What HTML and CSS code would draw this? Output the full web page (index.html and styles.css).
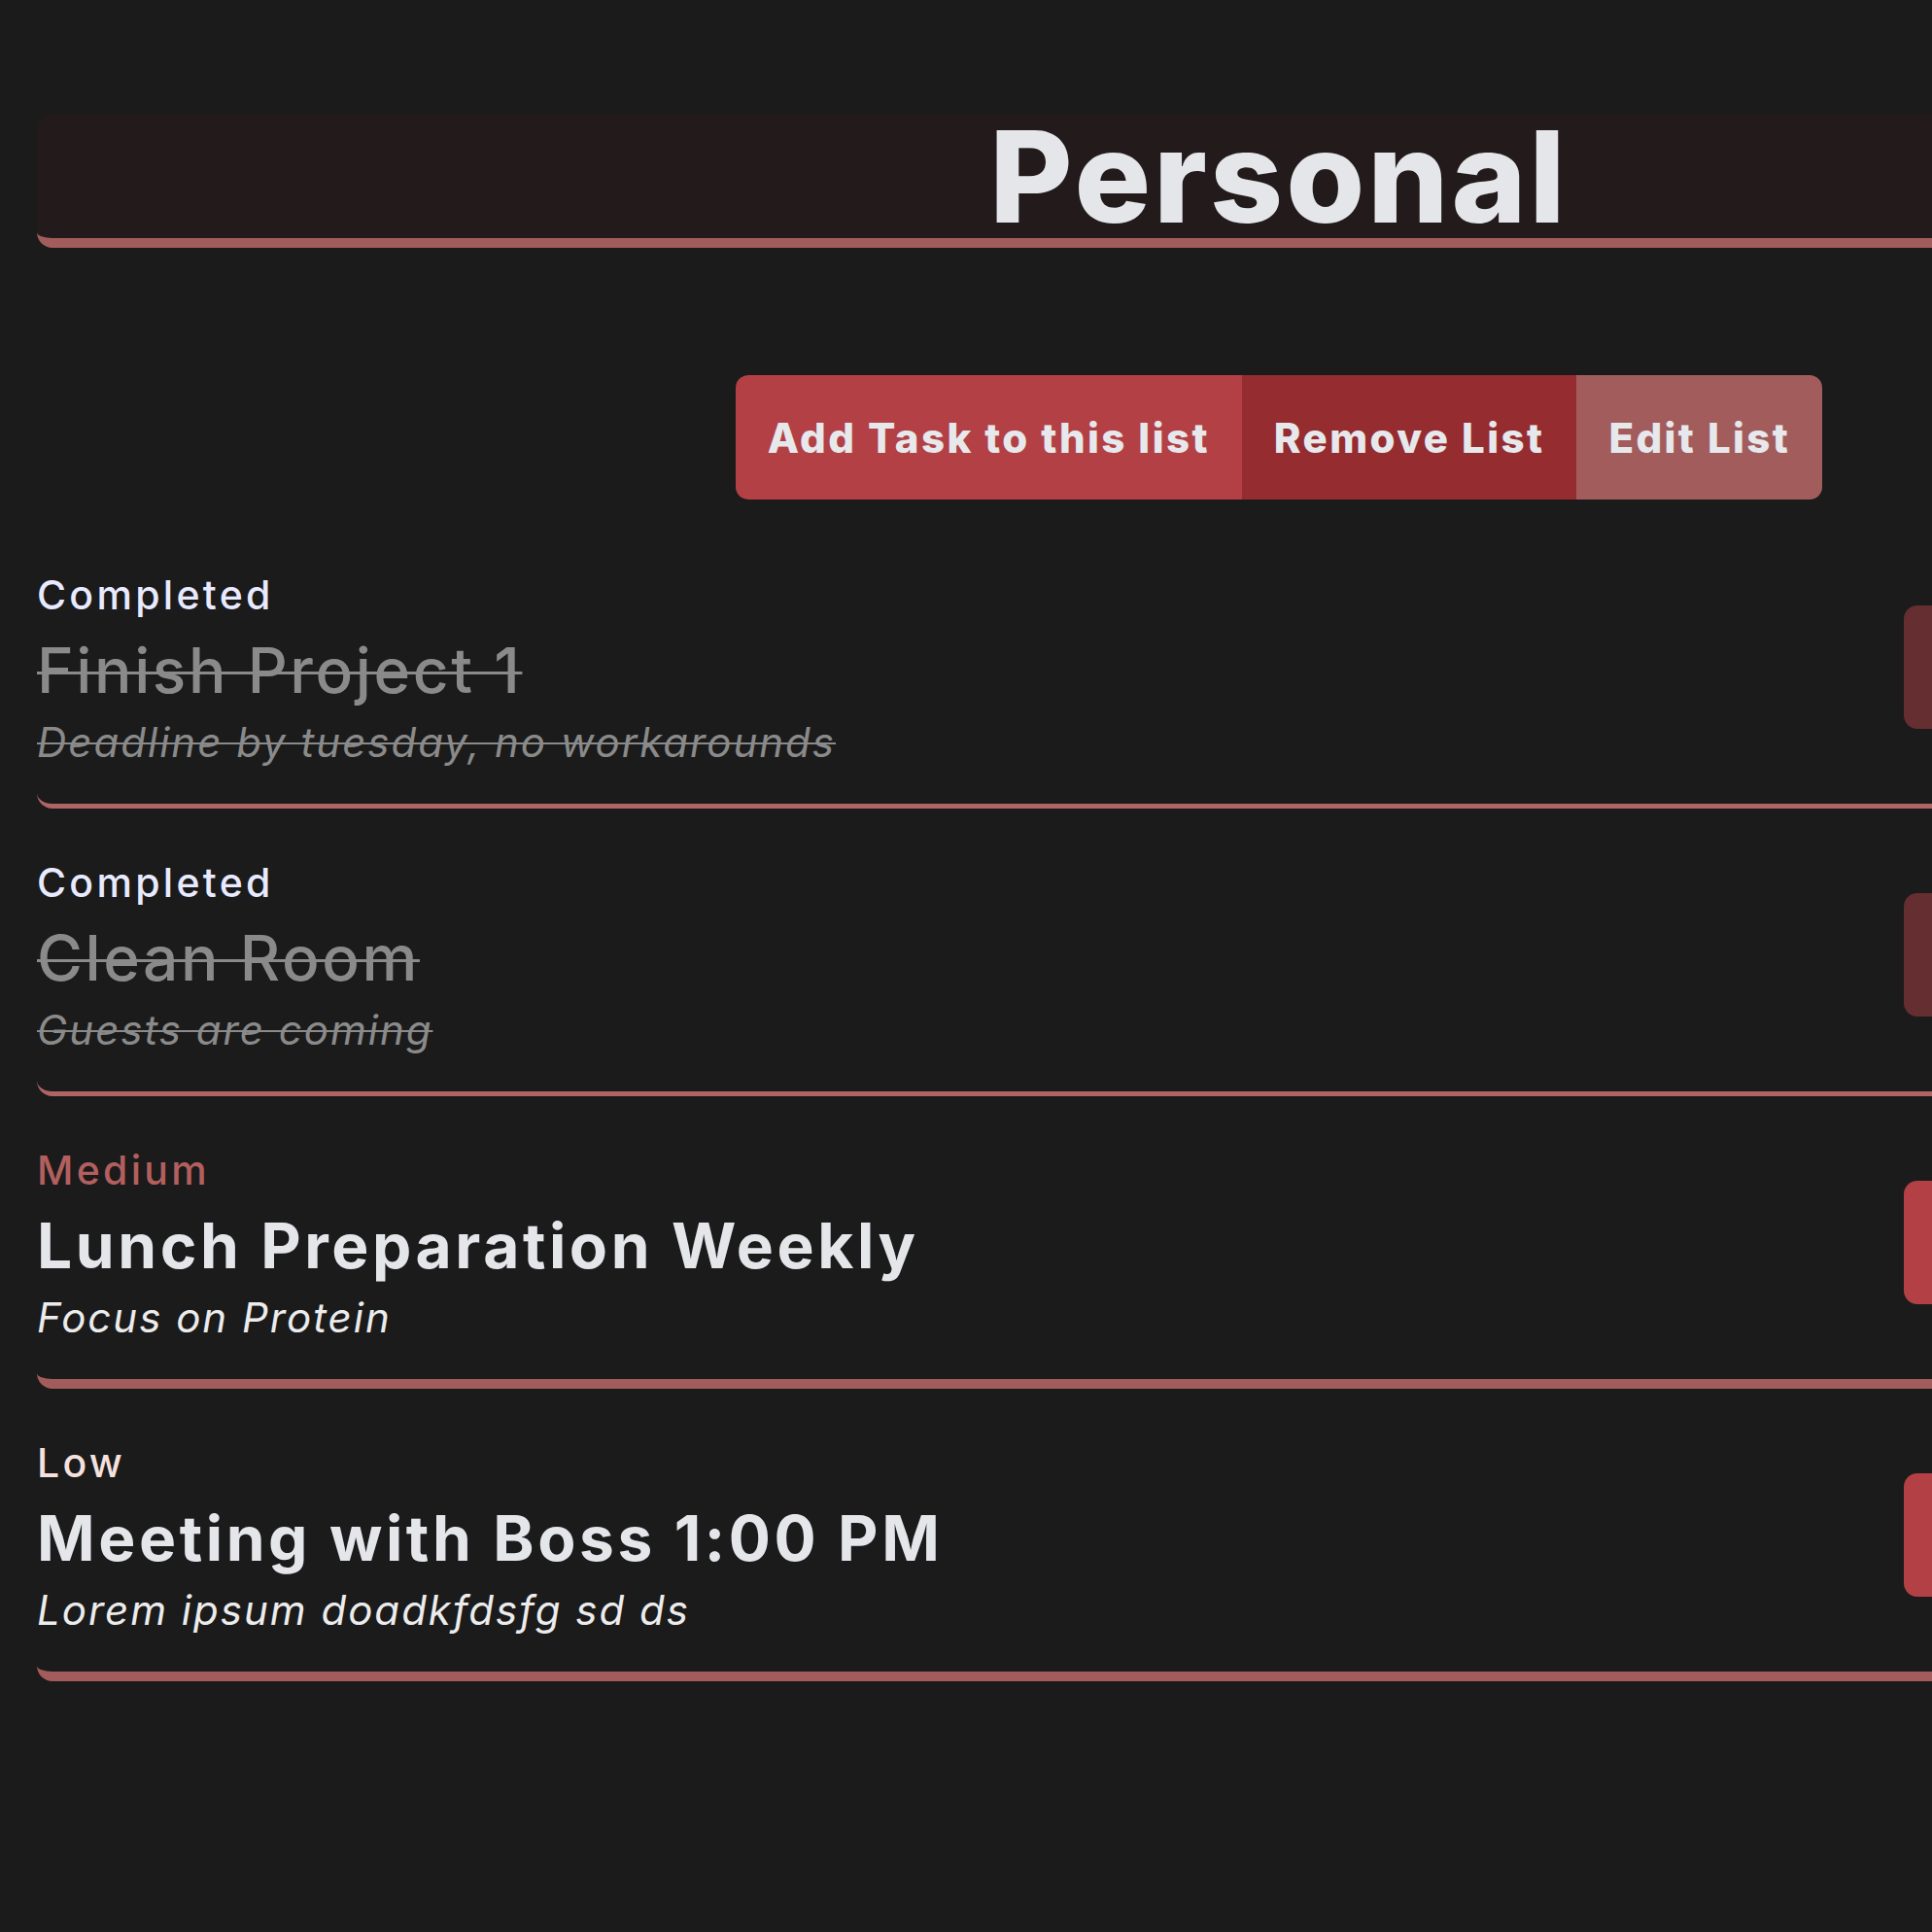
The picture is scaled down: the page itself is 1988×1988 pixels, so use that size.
FILE: index.html
```html
<!DOCTYPE html>
<html lang="en">
<head>
<meta charset="utf-8">
<title>Personal</title>
<link rel="stylesheet" href="styles.css">
</head>
<body>
<main class="page">
  <header class="list-header">
    <h1 class="list-title">Personal</h1>
  </header>

  <div class="actions">
    <div class="btn-group">
      <button class="btn btn-add">Add Task to this list</button>
      <button class="btn btn-remove">Remove List</button>
      <button class="btn btn-edit">Edit List</button>
    </div>
  </div>

  <ul class="tasks">
    <li class="task task-done">
      <div class="task-body">
        <div class="task-label label-done">Completed</div>
        <div class="task-title">Finish Project 1</div>
        <div class="task-desc">Deadline by tuesday, no workarounds</div>
      </div>
      <button class="task-btn" aria-label="Task options"></button>
    </li>
    <li class="task task-done">
      <div class="task-body">
        <div class="task-label label-done">Completed</div>
        <div class="task-title">Clean Room</div>
        <div class="task-desc">Guests are coming</div>
      </div>
      <button class="task-btn" aria-label="Task options"></button>
    </li>
    <li class="task">
      <div class="task-body">
        <div class="task-label label-medium">Medium</div>
        <div class="task-title">Lunch Preparation Weekly</div>
        <div class="task-desc">Focus on Protein</div>
      </div>
      <button class="task-btn" aria-label="Task options"></button>
    </li>
    <li class="task">
      <div class="task-body">
        <div class="task-label label-low">Low</div>
        <div class="task-title">Meeting with Boss 1:00 PM</div>
        <div class="task-desc">Lorem ipsum doadkfdsfg sd ds</div>
      </div>
      <button class="task-btn" aria-label="Task options"></button>
    </li>
  </ul>
</main>
</body>
</html>
```
FILE: styles.css
```css
html, body {
  margin: 0;
  padding: 0;
  background: #1b1b1b;
  overflow: hidden;
}

body {
  font-family: Inter, "Noto Sans", "DejaVu Sans", sans-serif;
  color: #e4e6ea;
}

.page {
  width: 2556px;
  margin-left: 38px;
  padding-top: 117px;
}

.list-header {
  height: 128px;
  background: #231b1b;
  border-bottom: 10px solid #a35c5c;
  border-radius: 16px;
  display: flex;
  align-items: center;
  justify-content: center;
}

.list-title {
  margin: 0;
  font-size: 131px;
  font-weight: 800;
  line-height: 1;
  letter-spacing: 3px;
  color: #e4e6ea;
}

.actions {
  display: flex;
  justify-content: center;
  margin-top: 131px;
  margin-bottom: 22px;
}

.btn-group {
  display: flex;
  border-radius: 13px;
  overflow: hidden;
}

.btn {
  height: 128px;
  padding: 0 33px;
  border: 0;
  font-family: inherit;
  font-size: 42px;
  font-weight: 800;
  letter-spacing: 2.4px;
  color: #e6e8ec;
}

.btn-add { background: #b34045; }
.btn-remove { background: #952c30; }
.btn-edit { background: #a35c5c; }

.tasks {
  list-style: none;
  margin: 0;
  padding: 0;
}

.task {
  display: flex;
  align-items: center;
  justify-content: space-between;
  padding: 41px 0 32px;
  border-bottom: 10px solid #a35c5c;
  border-radius: 16px;
}

.task-done {
  border-bottom: 5px solid #b06464;
}

.task-body {
  display: flex;
  flex-direction: column;
}

.task-label {
  font-size: 41px;
  font-weight: 500;
  line-height: 70px;
  letter-spacing: 3.3px;
}

.label-done { color: #e8eaff; }
.label-medium { color: #b35f5f; }
.label-low { color: #f5e1de; }

.task-title {
  font-size: 64px;
  font-weight: 700;
  line-height: 85px;
  letter-spacing: 3.6px;
  color: #e4e6ea;
}

.task-desc {
  font-size: 42px;
  font-style: italic;
  line-height: 63px;
  letter-spacing: 2px;
  color: #ececec;
}

.task-done .task-title,
.task-done .task-desc {
  color: #8a8a8a;
  font-weight: 500;
  text-decoration: line-through;
  text-decoration-thickness: 3px;
}

.task-done .task-title {
  letter-spacing: 2.6px;
}

.task-done .task-desc {
  font-weight: 400;
  text-decoration-thickness: 2px;
}

.task-btn {
  width: 635px;
  height: 127px;
  border: 0;
  border-radius: 14px;
  background: #b34045;
}

.task-done .task-btn {
  background: #652e30;
}
```
